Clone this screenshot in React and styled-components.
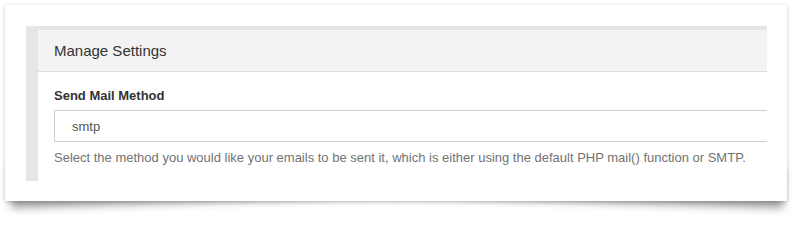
import React from 'react';
import styled, { createGlobalStyle } from 'styled-components';

const GlobalStyle = createGlobalStyle`
  html {
    background: #fff;
  }
  body {
    margin: 0;
    padding: 0;
    font-family: "Liberation Sans", Arial, sans-serif;
  }
`;

// own stacking context so the corner shadows sit between page and sheet
const Page = styled.div`
  position: relative;
  z-index: 0;
  padding: 5px 14px 0 5px;
  height: 230px;
  box-sizing: border-box;
`;

// white sheet with lifted (curled) corners
const Sheet = styled.div`
  position: relative;
  height: 196px;
  box-sizing: border-box;
  padding: 21px 20px 20px 21px;
  background: #fff;
  box-shadow: 0 1px 4px rgba(0, 0, 0, 0.22);

  &::before,
  &::after {
    content: '';
    position: absolute;
    z-index: -1;
    bottom: 14px;
    width: 50%;
    height: 20%;
    box-shadow: 0 15px 9px rgba(0, 0, 0, 0.38);
  }
  &::before {
    left: 5px;
    transform: rotate(-1.8deg);
  }
  &::after {
    right: 3px;
    transform: rotate(1.8deg);
  }
`;

const Panel = styled.div`
  height: 155px;
  box-sizing: border-box;
  border-left: 12px solid #e6e6e6;
  border-top: 4px solid #e6e6e6;
  overflow: hidden;
`;

const PanelHeader = styled.div`
  height: 42px;
  box-sizing: border-box;
  display: flex;
  align-items: center;
  padding: 0 16px;
  background: #f3f3f3;
  border-bottom: 1px solid #dcdcdc;
  color: #333;
  font-size: 15px;
`;

const PanelBody = styled.div`
  padding: 15px 0 0 16px;
`;

const Label = styled.label`
  display: block;
  font-size: 13px;
  font-weight: bold;
  line-height: 18px;
  color: #333;
  margin-bottom: 5px;
`;

const Field = styled.div`
  height: 32px;
  box-sizing: border-box;
  margin-right: -20px;
  display: flex;
  align-items: center;
  padding-left: 17px;
  border: 1px solid #cfcfcf;
  font-size: 13px;
  color: #555;
`;

const Help = styled.p`
  margin: 7px 0 0;
  font-size: 13px;
  line-height: 18px;
  color: #737373;
  white-space: nowrap;
`;

export default function App() {
  return (
    <Page>
      <GlobalStyle />
      <Sheet>
        <Panel>
          <PanelHeader>Manage Settings</PanelHeader>
          <PanelBody>
            <Label>Send Mail Method</Label>
            <Field>smtp</Field>
            <Help>
              Select the method you would like your emails to be sent it, which is either using the default PHP mail() function or SMTP.
            </Help>
          </PanelBody>
        </Panel>
      </Sheet>
    </Page>
  );
}
